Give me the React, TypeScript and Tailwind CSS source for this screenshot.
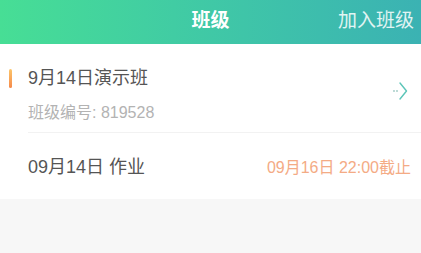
export default function App() {
  const font = { fontFamily: '"Liberation Sans", "Noto Sans CJK SC", sans-serif' }

  return (
    <div className="w-[421px] h-[253px] bg-[#f7f7f7] overflow-hidden" style={font}>
      <header className="relative h-[44px] bg-gradient-to-r from-[#47de95] to-[#3bb2b3] flex items-center justify-center">
        <h1 className="text-[19px] font-bold text-white leading-none -mt-[4px]">班级</h1>
        <button className="absolute right-[7px] top-0 h-full flex items-center text-[19px] text-white/85 leading-none -mt-[2px]">
          加入班级
        </button>
      </header>

      <div className="bg-white pl-[28px]">
        <div className="relative h-[89px] flex items-start justify-between pr-[13px] border-b border-[#f2f2f2]">
          <span className="absolute left-[-19px] top-[25px] w-[3px] h-[19px] rounded-full bg-gradient-to-b from-[#fbc56a] to-[#f5894a]" />
          <div className="flex flex-col pt-[22px]">
            <p className="text-[18px] text-[#555] leading-[24px]">9月14日演示班</p>
            <p className="text-[16px] text-[#b3b3b3] leading-[22px] mt-[12px]">班级编号: 819528</p>
          </div>
          <svg width="16" height="20" viewBox="0 0 16 20" fill="none" className="mt-[37px]">
            <circle cx="2" cy="10" r="0.9" fill="#9fc9c3" />
            <circle cx="5" cy="10" r="0.9" fill="#9fc9c3" />
            <path d="M8 2 L14.5 10 L8 18" stroke="#5cc5b8" strokeWidth="1.4" strokeLinecap="round" strokeLinejoin="round" />
          </svg>
        </div>
        <div className="h-[66px] flex items-center justify-between pr-[10px] pt-[3px]">
          <span className="text-[18px] text-[#555]">09月14日 作业</span>
          <span className="text-[16px] text-[#f4ab85]">09月16日 22:00截止</span>
        </div>
      </div>
    </div>
  )
}
